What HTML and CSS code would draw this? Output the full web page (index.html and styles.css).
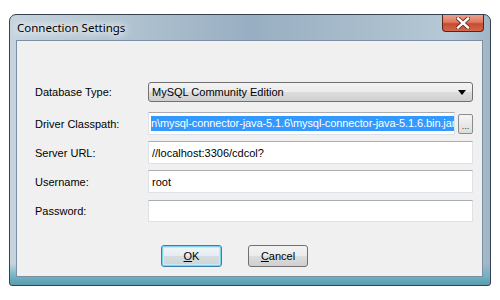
FILE: index.html
```html
<!DOCTYPE html>
<html lang="en">
<head>
    <meta charset="UTF-8">
    <title>Connection Settings</title>
    <link rel="stylesheet" href="styles.css">
</head>
<body>

    <div class="window">
        <!-- Title bar -->
        <div class="titlebar">
            <span class="title">Connection Settings</span>
            <div class="close-btn">
                <svg width="14" height="12" viewBox="0 0 14 12">
                    <path d="M2 1.5 L12 10.5 M12 1.5 L2 10.5" stroke="#6b2a1e" stroke-width="4.2" stroke-linecap="square"/>
                    <path d="M2 1.5 L12 10.5 M12 1.5 L2 10.5" stroke="#fff" stroke-width="2.4" stroke-linecap="square"/>
                </svg>
            </div>
        </div>

        <!-- Client area -->
        <div class="client">
            <div class="form">
                <div class="row row-select">
                    <label>Database Type:</label>
                    <div class="select">
                        <span>MySQL Community Edition</span>
                        <span class="arrow"></span>
                    </div>
                </div>
                <div class="row row-path">
                    <label>Driver Classpath:</label>
                    <div class="input selected">
                        <span class="sel">n\mysql-connector-java-5.1.6\mysql-connector-java-5.1.6.bin.jar</span>
                    </div>
                    <div class="browse">...</div>
                </div>
                <div class="row row-url">
                    <label>Server URL:</label>
                    <div class="input">//localhost:3306/cdcol?</div>
                </div>
                <div class="row row-user">
                    <label>Username:</label>
                    <div class="input">root</div>
                </div>
                <div class="row row-pass">
                    <label>Password:</label>
                    <div class="input"></div>
                </div>
            </div>

            <div class="buttons">
                <div class="btn btn-default"><u>O</u>K</div>
                <div class="btn"><u>C</u>ancel</div>
            </div>
        </div>
    </div>

</body>
</html>
```

FILE: styles.css
```css
body {
    margin: 0;
    padding: 0;
    background-color: #fff;
    font-family: 'Liberation Sans', Arial, sans-serif;
    font-size: 11px;
    color: #000;
}

/* Window frame */
.window {
    width: 482px;
    height: 272px;
    margin: 14px 0 0 9px;
    box-sizing: border-box;
    border: 1px solid #34424f;
    border-radius: 7px 7px 3px 3px;
    padding: 0 7px 8px 6px;
    display: flex;
    flex-direction: column;
    background:
        linear-gradient(to bottom, rgba(110, 180, 196, 0) 92%, #6fb1c3 97%, #5a9cae 100%),
        linear-gradient(to right, #c6d4de 0%, #b0c2d0 25%, #98aec2 50%, #a9bdcc 75%, #b7c9d6 92%, #9fb6c7 100%);
}

.titlebar {
    height: 25px;
    display: flex;
    justify-content: space-between;
    align-items: flex-start;
}

.title {
    font-family: 'Noto Sans', 'Open Sans', sans-serif;
    font-size: 11.5px;
    margin: 5px 0 0 1px;
    color: #000;
    text-shadow: 0 0 6px #fff, 0 0 10px #fff, 0 0 14px #fff;
}

/* Vista close button */
.close-btn {
    width: 42px;
    height: 17px;
    margin-right: -1px;
    box-sizing: border-box;
    border: 1px solid #5c2318;
    border-top: none;
    border-radius: 0 0 4px 4px;
    background: linear-gradient(to bottom, #eaa08c 0%, #dc7a62 45%, #c84a30 55%, #d4684c 100%);
    display: flex;
    justify-content: center;
    align-items: center;
}

.client {
    flex: 1;
    border: 1px solid #7b8fa2;
    background-color: #f0f0f0;
    padding: 41px 9px 0 18px;
}

/* Form rows */
.row {
    display: flex;
    align-items: center;
    height: 23px;
}

.row label {
    width: 113px;
    flex-shrink: 0;
}

.row-select {
    height: 20px;
}

.row-path {
    margin-top: 10px;
}

.row-url,
.row-user {
    margin-top: 6px;
}

.row-pass {
    margin-top: 7px;
    height: 22px;
}

.select {
    flex: 1;
    height: 20px;
    box-sizing: border-box;
    border: 1px solid #707070;
    border-radius: 3px;
    background: linear-gradient(to bottom, #f3f3f3 0%, #ebebeb 50%, #dddddd 51%, #cfcfcf 100%);
    display: flex;
    align-items: center;
    justify-content: space-between;
    padding: 0 6px 0 3px;
}

.arrow {
    width: 0;
    height: 0;
    border-left: 4px solid transparent;
    border-right: 4px solid transparent;
    border-top: 5px solid #000;
}

.input {
    flex: 1;
    height: 100%;
    box-sizing: border-box;
    border: 1px solid #dde2e8;
    border-top-color: #abadb3;
    background-color: #fff;
    display: flex;
    align-items: center;
    padding: 0 3px;
    overflow: hidden;
    white-space: nowrap;
}

.input.selected {
    flex: none;
    width: 307px;
    padding: 0 2px;
}

.sel {
    background-color: #3399ff;
    color: #fff;
    line-height: 15px;
    letter-spacing: -0.1px;
}

.browse {
    width: 15px;
    height: 20px;
    margin-left: 3px;
    box-sizing: border-box;
    border: 1px solid #8c8c8c;
    border-radius: 2px;
    background: linear-gradient(to bottom, #f6f6f6, #dcdcdc);
    font-size: 9px;
    line-height: 22px;
    text-align: center;
    color: #333;
    overflow: hidden;
}

/* Buttons */
.buttons {
    display: flex;
    gap: 26px;
    margin: 23px 0 0 126px;
}

.btn {
    width: 60px;
    height: 22px;
    box-sizing: border-box;
    border: 1px solid #707070;
    border-radius: 3px;
    background: linear-gradient(to bottom, #f2f2f2 0%, #ebebeb 50%, #dddddd 51%, #cfcfcf 100%);
    display: flex;
    align-items: center;
    justify-content: center;
}

/* Default button: grey face, blue glow border */
.btn-default {
    width: 61px;
    border-color: #3c7fb1;
    box-shadow: inset 0 0 0 1px #7fd0ea, inset 0 0 0 2px #c4ecf8;
    background: linear-gradient(to bottom, #f0f5f8 0%, #e6ecef 50%, #d6dde1 51%, #ccd4d8 100%);
}
```
